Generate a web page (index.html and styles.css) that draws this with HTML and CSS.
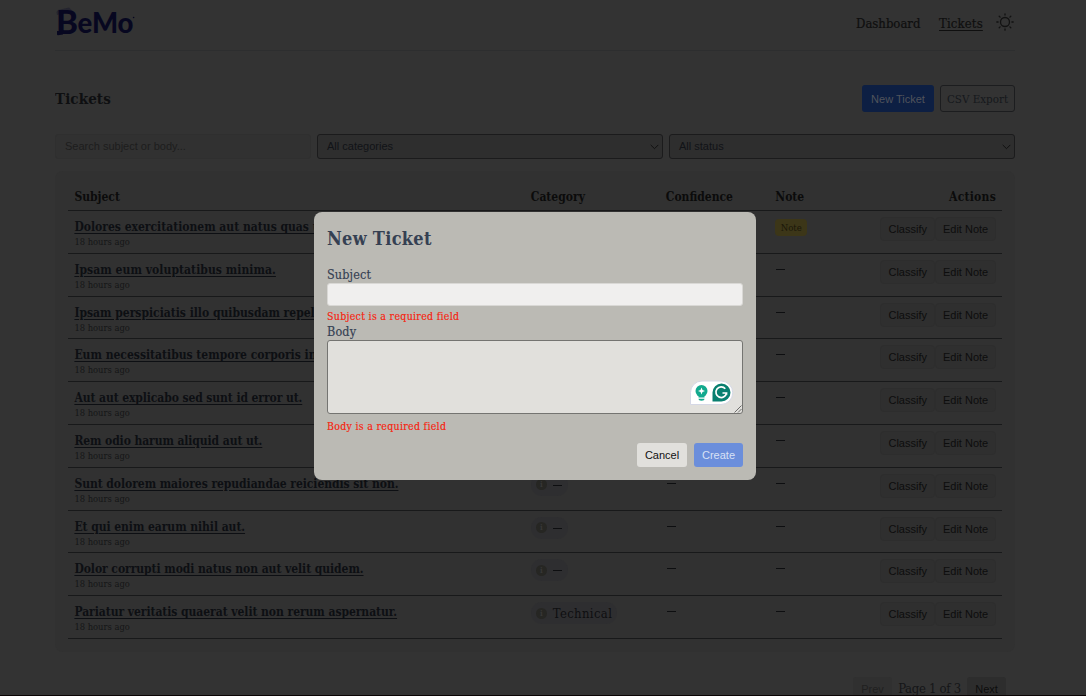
FILE: index.html
```
<!DOCTYPE html>
<html lang="en">
<head>
<meta charset="utf-8">
<title>Tickets</title>
<link rel="stylesheet" href="styles.css">
</head>
<body>
<div class="page">
  <header class="topbar">
    <svg class="logo" width="82" height="46" viewBox="0 -7 82 46">
      <path d="M1.500 5 L3 3 L14 .5 L18 4.500 L10 5.500 L2 8Z" fill="#25252f"/>
      <path d="M2 24h6v3.500l-5 .8q-1 0-1-1z" fill="#070720"/>
      <text x="1" y="27" class="logo-b" textLength="22" lengthAdjust="spacingAndGlyphs">B</text>
      <text x="22.500" y="26" class="logo-rest" textLength="56" lengthAdjust="spacingAndGlyphs">eMo</text>
      <circle cx="78.600" cy="10.500" r=".8" fill="#070720"/>
    </svg>
    <nav class="nav">
      <a class="nav-dashboard">Dashboard</a>
      <a class="nav-tickets">Tickets</a>
      <svg class="sun" width="18" height="18" viewBox="0 0 18 18" fill="none" stroke="#121212" stroke-width="1.3" stroke-linecap="round"><circle cx="9" cy="9" r="4.500"/><path d="M9 .8v1.300M9 15.900v1.300M.8 9h1.300M15.900 9h1.300M3.200 3.200l.9.9M13.900 13.900l.9.9M3.200 14.800l.9-.9M13.900 4.100l.9-.9"/></svg>
    </nav>
  </header>
  <div class="heading">
    <h1>Tickets</h1>
    <div class="heading-actions"><button class="btn-new">New Ticket</button><button class="btn-csv">CSV Export</button></div>
  </div>
  <div class="filters">
    <div class="search">Search subject or body...</div>
    <div class="select"><span>All categories</span><svg width="9" height="6" viewBox="0 0 9 6"><path d="M.7 .9L4.500 4.700L8.300 .9"/></svg></div>
    <div class="select"><span>All status</span><svg width="9" height="6" viewBox="0 0 9 6"><path d="M.7 .9L4.500 4.700L8.300 .9"/></svg></div>
  </div>
  <section class="card">
    <div class="row head"><span>Subject</span><span>Category</span><span>Confidence</span><span>Note</span><span class="right">Actions</span></div>
    <div class="row"><div><a class="title loose">Dolores exercitationem aut natus quas ut.</a><small>18 hours ago</small></div><div></div><div></div><div><span class="badge">Note</span></div><div class="actions"><button>Classify</button><button>Edit Note</button></div></div>
    <div class="row"><div><a class="title looser">Ipsam eum voluptatibus minima.</a><small>18 hours ago</small></div><div></div><div></div><div><i class="dash"></i></div><div class="actions"><button>Classify</button><button>Edit Note</button></div></div>
    <div class="row"><div><a class="title loose">Ipsam perspiciatis illo quibusdam repellat.</a><small>18 hours ago</small></div><div></div><div></div><div><i class="dash"></i></div><div class="actions"><button>Classify</button><button>Edit Note</button></div></div>
    <div class="row"><div><a class="title loose">Eum necessitatibus tempore corporis in.</a><small>18 hours ago</small></div><div></div><div></div><div><i class="dash"></i></div><div class="actions"><button>Classify</button><button>Edit Note</button></div></div>
    <div class="row"><div><a class="title tight">Aut aut explicabo sed sunt id error ut.</a><small>18 hours ago</small></div><div></div><div></div><div><i class="dash"></i></div><div class="actions"><button>Classify</button><button>Edit Note</button></div></div>
    <div class="row"><div><a class="title tight">Rem odio harum aliquid aut ut.</a><small>18 hours ago</small></div><div></div><div></div><div><i class="dash"></i></div><div class="actions"><button>Classify</button><button>Edit Note</button></div></div>
    <div class="row"><div><a class="title">Sunt dolorem maiores repudiandae reiciendis sit non.</a><small>18 hours ago</small></div><div><span class="pill"><b>i</b><i class="dash"></i></span></div><div><i class="dash"></i></div><div><i class="dash"></i></div><div class="actions"><button>Classify</button><button>Edit Note</button></div></div>
    <div class="row"><div><a class="title">Et qui enim earum nihil aut.</a><small>18 hours ago</small></div><div><span class="pill"><b>i</b><i class="dash"></i></span></div><div><i class="dash"></i></div><div><i class="dash"></i></div><div class="actions"><button>Classify</button><button>Edit Note</button></div></div>
    <div class="row"><div><a class="title">Dolor corrupti modi natus non aut velit quidem.</a><small>18 hours ago</small></div><div><span class="pill"><b>i</b><i class="dash"></i></span></div><div><i class="dash"></i></div><div><i class="dash"></i></div><div class="actions"><button>Classify</button><button>Edit Note</button></div></div>
    <div class="row"><div><a class="title">Pariatur veritatis quaerat velit non rerum aspernatur.</a><small>18 hours ago</small></div><div><span class="pill"><b>i</b><span class="cat">Technical</span></span></div><div><i class="dash"></i></div><div><i class="dash"></i></div><div class="actions"><button>Classify</button><button>Edit Note</button></div></div>
  </section>
  <footer class="pager"><button class="prev">Prev</button><span>Page 1 of 3</span><button class="next">Next</button></footer>
</div>
<div class="modal">
  <h2>New Ticket</h2>
  <label>Subject</label>
  <div class="input"></div>
  <p class="error">Subject is a required field</p>
  <label class="label-body">Body</label>
  <div class="textarea">
    <svg class="assistant" width="45" height="26" viewBox="0 0 45 26">
      <path d="M1.500 24.500V12.500A11.500 11.500 0 0 1 13 1H32A11.500 11.500 0 0 1 32 24.500Z" fill="#fff" stroke="#d5d8e6"/>
      <circle cx="12.500" cy="11" r="6" fill="#12a98e"/><path d="M9.500 15h6v2.500h-6zM9.500 18.700h6c0 1.300-1 2-3 2s-3-.7-3-2z" fill="#12a98e"/><path d="M12.500 7.500l1 2.500 2.500 1-2.500 1-1 2.500-1-2.500-2.500-1 2.500-1z" fill="#fff"/>
      <path d="M23.500 21.500V12.500A9 9 0 1 1 32.500 21.500Z" fill="#087f70"/>
      <path d="M36.300 8.800A5.300 5.300 0 1 0 37.500 13H33.500M37.500 13V14.800" fill="none" stroke="#fff" stroke-width="1.700"/>
    </svg>
    <svg class="grip" width="8" height="8" viewBox="0 0 8 8" stroke="#60605d" stroke-width=".9"><path d="M.5 7.500L7.500 .5M4 7.500L7.500 4"/></svg>
  </div>
  <p class="error">Body is a required field</p>
  <div class="modal-actions"><button class="cancel">Cancel</button><button class="create">Create</button></div>
</div>
<div class="edge"></div>
</body>
</html>
```
FILE: styles.css
```
* { box-sizing: border-box; }
body { margin: 0; width: 1086px; height: 696px; overflow: hidden; background: #333; color: #0e0f11; font-family: "Roboto Slab", "DejaVu Serif Condensed", "DejaVu Serif", serif; font-stretch: condensed; }
button { font: 11px "Liberation Sans", Arial, sans-serif; border: 0; padding: 0; white-space: nowrap; }
h1, h2, p { margin: 0; }
.page { width: 960px; height: 696px; margin-left: 55px; overflow: hidden; }
.topbar { height: 51px; border-bottom: 1px solid #2d2e2f; display: flex; justify-content: space-between; }
.logo { display: block; font-family: Lato, sans-serif; font-weight: 900; fill: #070720; }
.logo-b { font-size: 32px; }
.logo-rest { font-size: 28px; }
.nav { display: flex; font-size: 13px; line-height: 18px; color: #0f0f0f; padding-top: 15px; -webkit-text-stroke: .2px #0f0f0f; }
.nav-dashboard { width: 83px; }
.nav-tickets { width: 57px; letter-spacing: .15px; text-decoration: underline; text-underline-offset: 2px; }
.sun { margin-top: -2px; margin-right: 1px; }
.heading { height: 83px; display: flex; justify-content: space-between; padding-top: 34px; }
h1 { font-size: 15px; line-height: 28px; letter-spacing: .1px; }
.heading-actions { display: flex; gap: 6px; }
.btn-new { width: 72px; height: 27px; border-radius: 3px; background: #0d1f43; color: #50535b; }
.btn-csv { width: 75px; height: 27px; border-radius: 3px; border: 1px solid #1c1d1f; background: none; color: #15181c; font-size: 11.500px; font-family: "Roboto Slab", "DejaVu Serif Condensed", "DejaVu Serif", serif; font-stretch: condensed; }
.filters { display: flex; gap: 6px; height: 25px; font: 11px/23px "Liberation Sans", Arial, sans-serif; }
.search { width: 256px; border: 1px solid #2f2f2f; border-radius: 3px; padding-left: 9px; background: #313131; color: #1d1d1d; }
.select { width: 346px; border: 1px solid #1b1b1c; border-radius: 3px; padding: 0 3px 0 9px; display: flex; justify-content: space-between; align-items: center; background: #2e2e2e; color: #111317; }
.select path { fill: none; stroke: #111; stroke-width: 1; }
.card { margin-top: 12px; height: 481px; background: #313131; border-radius: 8px; padding: 12px 13px; }
.row { display: grid; grid-template-columns: 456.400px 135px 109.500px 105px 1fr; height: 42.800px; border-bottom: 1px solid #18191a; padding: 0 6px 0 6.400px; }
.head { height: 28px; font-size: 12px; font-weight: 700; line-height: 29px; color: #0b0b0b; }
.head .right { text-align: right; letter-spacing: .25px; }
.row > div { padding-top: 6px; min-width: 0; }
.title { display: block; width: max-content; font-size: 12px; line-height: 20px; height: 20px; letter-spacing: -.055px; font-weight: 700; color: #0d0f13; text-decoration: underline; text-decoration-thickness: 1px; text-underline-offset: 2px; white-space: nowrap; }
.title.loose { letter-spacing: 0; }
.title.looser { letter-spacing: .06px; }
.title.tight { letter-spacing: -.09px; }
small { display: block; font-size: 9.300px; line-height: 10px; color: #151617; }
.dash { display: block; width: 9px; height: 1px; background: #0d0e10; margin: 9px 0 0 .800px; }
.badge { display: block; width: 32px; height: 17px; margin-top: 2px; border-radius: 4px; background: #3c3618; color: #1a1609; text-align: center; font-size: 9.500px; line-height: 17px; }
.row > .actions { display: flex; justify-content: flex-end; }
.actions button { width: 55px; height: 24px; border: 1px solid #2d2d2d; border-radius: 4px; background: #2f2f2f; color: #0d0d0d; }
.actions button + button { width: 61px; }
.pill { display: inline-flex; align-items: center; gap: 6px; height: 22px; min-width: 37px; padding: 0 5px; border-radius: 11px; background: #2e2e30; font-size: 13px; vertical-align: top; }
.cat { letter-spacing: .35px; }
.pill b { width: 11px; height: 11px; border-radius: 50%; background: #262623; color: #373737; font-size: 8px; line-height: 11px; text-align: center; }
.pill .dash { margin: 1px 0 0; }
.pager { display: flex; justify-content: flex-end; margin-top: 25px; padding-right: 9px; font-size: 13px; line-height: 24px; color: #151618; }
.pager button { width: 39px; height: 23px; border-radius: 3px; background: #2d2d2d; color: #0d0d0d; }
.pager .prev { background: #303030; color: #202020; }
.pager span { width: 75px; text-align: center; white-space: nowrap; letter-spacing: -.3px; }
.modal { position: absolute; left: 314px; top: 212px; width: 442px; height: 267.500px; padding: 14px 13px 13px; border-radius: 8px; background: #bbbab4; color: #354052; }
h2 { font-size: 18px; line-height: 26px; letter-spacing: .3px; }
label { display: block; font-size: 12.500px; line-height: 16px; margin-top: 15px; letter-spacing: .15px; -webkit-text-stroke: .15px; }
.input { height: 23px; background: #f0efee; border: 1px solid #d9d8d5; border-radius: 3px; margin-bottom: 2px; }
.error { color: #f71d0d; font-size: 10.500px; line-height: 16px; letter-spacing: .3px; -webkit-text-stroke: .15px; }
.label-body { margin-top: 0; line-height: 16px; }
.textarea { position: relative; height: 74px; border: 1px solid #747471; border-radius: 3px; background: #e1e0dc; margin-bottom: 4px; }
.assistant { position: absolute; right: 8px; bottom: 7px; }
.grip { position: absolute; right: 0; bottom: 0; }
.modal-actions { display: flex; justify-content: flex-end; gap: 7px; margin-top: 9px; }
.modal-actions button { width: 49px; height: 24px; border-radius: 3px; background: #e1e0dc; color: #111; }
.modal-actions .cancel { width: 50px; }
.modal-actions .create { background: #6b8edb; color: #d8e1f5; }
.edge { position: absolute; left: 0; top: 695px; width: 1086px; height: 1px; background: #0b0505; }
```
